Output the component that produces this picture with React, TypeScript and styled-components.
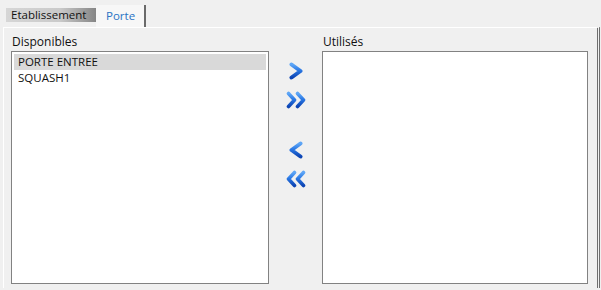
import styled, { createGlobalStyle } from "styled-components";

const GlobalStyle = createGlobalStyle`
  html, body {
    margin: 0;
    background: #f0f0f0;
  }
  body {
    font-family: "Open Sans", "Liberation Sans", sans-serif;
    font-size: 12px;
    color: #111;
  }
`;

type Dir = "right" | "left";

function Chevron({ dir, double }: { dir: Dir; double?: boolean }) {
  const w = double ? 22 : 16;
  const arms = double
    ? ["M3.5 2.5 L9.5 9 L3.5 15.5", "M12.5 2.5 L18.5 9 L12.5 15.5"]
    : ["M3.5 2.5 L12.5 9 L3.5 15.5"];
  const id = `g-${dir}-${double ? 2 : 1}`;
  return (
    <svg
      width={w}
      height={18}
      viewBox={`0 0 ${w} 18`}
      style={dir === "left" ? { transform: "scaleX(-1)" } : undefined}
    >
      <defs>
        <linearGradient id={id} x1="0" y1="0" x2="0" y2="1">
          <stop offset="0" stopColor="#5ea6f6" />
          <stop offset="0.45" stopColor="#2a78e4" />
          <stop offset="1" stopColor="#0d45b4" />
        </linearGradient>
      </defs>
      {arms.map((d) => (
        <path
          key={d}
          d={d}
          fill="none"
          stroke={`url(#${id})`}
          strokeWidth={double ? 3.6 : 4}
          strokeLinecap="round"
          strokeLinejoin="round"
        />
      ))}
    </svg>
  );
}

export default function App() {
  return (
    <>
      <GlobalStyle />
      <Screen>
        <TabBar>
          <Tab>Etablissement</Tab>
          <Tab $active>Porte</Tab>
        </TabBar>
        <Panel>
          <Column $width={258}>
            <Label>Disponibles</Label>
            <ListBox>
              <Row $selected>PORTE ENTREE</Row>
              <Row>SQUASH1</Row>
            </ListBox>
          </Column>
          <Buttons>
            <Group>
              <MoveButton aria-label="Ajouter">
                <Chevron dir="right" />
              </MoveButton>
              <MoveButton aria-label="Ajouter tout">
                <Chevron dir="right" double />
              </MoveButton>
            </Group>
            <Group>
              <MoveButton aria-label="Retirer">
                <Chevron dir="left" />
              </MoveButton>
              <MoveButton aria-label="Retirer tout">
                <Chevron dir="left" double />
              </MoveButton>
            </Group>
          </Buttons>
          <Column $width={266}>
            <Label>Utilisés</Label>
            <ListBox />
          </Column>
        </Panel>
      </Screen>
    </>
  );
}

const Screen = styled.div`
  width: 601px;
  height: 290px;
  display: flex;
  flex-direction: column;
  overflow: hidden;
`;

const TabBar = styled.div`
  height: 27px;
  display: flex;
  align-items: flex-start;
  padding-left: 6px;
`;

const Tab = styled.div<{ $active?: boolean }>`
  box-sizing: border-box;
  font-size: 11.5px;
  white-space: nowrap;
  ${({ $active }) =>
    $active
      ? `
    margin-top: 5px;
    height: 22px;
    width: 50px;
    padding: 3px 0 0 10px;
    color: #2a73c4;
    background: #f7f7f7;
    border-right: 2px solid #6a6a6a;
  `
      : `
    margin-top: 8px;
    height: 14px;
    width: 90px;
    padding: 0 0 0 5px;
    line-height: 14px;
    color: #111;
    background: linear-gradient(to right, #d6d6d6 0%, #cacaca 60%, #858585 100%);
  `}
`;

const Panel = styled.div`
  flex: 1;
  display: flex;
  margin: 0 1px 2px 3px;
  padding: 6px 0 0 7px;
  border-top: 1px solid #ffffff;
  border-left: 1px solid #ffffff;
  border-right: 3px double #6e6e6e;
`;

const Column = styled.div<{ $width: number }>`
  width: ${({ $width }) => $width}px;
  display: flex;
  flex-direction: column;
`;

const Label = styled.div`
  height: 17px;
  line-height: 15px;
  padding-left: 1px;
`;

const ListBox = styled.div`
  box-sizing: border-box;
  height: 233px;
  background: #ffffff;
  border: 1px solid #828282;
  padding: 2px;
`;

const Row = styled.div<{ $selected?: boolean }>`
  height: 16px;
  line-height: 16px;
  padding-left: 4px;
  font-size: 11.5px;
  background: ${({ $selected }) => ($selected ? "#d9d9d9" : "transparent")};
`;

const Buttons = styled.div`
  width: 53px;
  display: flex;
  flex-direction: column;
  align-items: center;
  padding-top: 28px;
  gap: 32px;
`;

const Group = styled.div`
  display: flex;
  flex-direction: column;
  gap: 11px;
`;

const MoveButton = styled.button`
  width: 24px;
  height: 18px;
  padding: 0;
  border: none;
  background: transparent;
  display: flex;
  align-items: center;
  justify-content: center;
  cursor: pointer;
`;
